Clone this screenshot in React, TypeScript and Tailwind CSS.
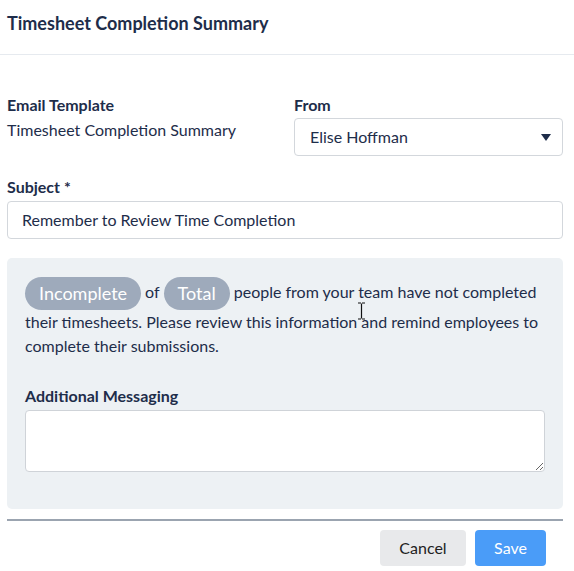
import React from 'react';

const Field: React.FC<{ label: string; children: React.ReactNode }> = ({ label, children }) => (
  <div className="flex flex-col">
    <span className="text-[16px] font-bold leading-[20px] text-[#1e2d4a]">{label}</span>
    {children}
  </div>
);

export default function App() {
  return (
    <div className="relative w-[574px] h-[571px] bg-white text-[#1e2d4a] font-['Lato',sans-serif]">
      <div className="h-[55px] border-b border-[#e6eaef] px-[7px] pt-[12px]">
        <h1 className="text-[18px] font-bold leading-[22px]">Timesheet Completion Summary</h1>
      </div>

      <div className="pl-[7px] pr-[11px] pt-[40px]">
        <div className="grid grid-cols-[287px_1fr]">
          <Field label="Email Template">
            <span className="mt-[5px] text-[16px] leading-[20px]">Timesheet Completion Summary</span>
          </Field>
          <Field label="From">
            <div className="mt-[3px] h-[38px] rounded-[4px] border border-[#d3d7dc] flex items-center justify-between pl-[15px] pr-[11px]">
              <span className="text-[16px]">Elise Hoffman</span>
              <svg width="10" height="7" viewBox="0 0 10 7"><path d="M0 0h10L5 7z" fill="#1e2d4a" /></svg>
            </div>
          </Field>
        </div>

        <div className="mt-[21px]">
          <Field label="Subject *">
            <div className="mt-[4px] h-[38px] rounded-[4px] border border-[#d3d7dc] flex items-center px-[14px]">
              <span className="text-[16px]">Remember to Review Time Completion</span>
            </div>
          </Field>
        </div>

        <div className="mt-[19px] h-[251px] rounded-[5px] bg-[#edf1f4] px-[18px] pt-[19px]">
          <p className="text-[16px] leading-[24px]">
            <span className="inline-block h-[33px] leading-[33px] rounded-full bg-[#9eaabb] px-[14px] text-[18px] text-white align-middle">Incomplete</span>
            <span className="mx-[4px]">of</span>
            <span className="inline-block h-[33px] leading-[33px] rounded-full bg-[#9eaabb] px-[14px] text-[18px] text-white align-middle">Total</span>
            <span className="ml-[4px]">people from your team have not completed their timesheets. Please review this information and remind employees to complete their submissions.</span>
          </p>
          <div className="mt-[28px]">
            <Field label="Additional Messaging">
              <textarea className="mt-[4px] h-[62px] w-full rounded-[4px] border border-[#cfd3d8] bg-white resize-y outline-none" />
            </Field>
          </div>
        </div>

        <div className="mt-[10px] border-t-2 border-[#9ba4b0]" />

        <div className="flex justify-end gap-[9px] pt-[9px] pr-[17px]">
          <button className="h-[36px] w-[86px] rounded-[4px] bg-[#e8e9eb] text-[16px] text-[#222]">Cancel</button>
          <button className="h-[36px] w-[71px] rounded-[4px] bg-[#4a9cf8] text-[16px] text-white">Save</button>
        </div>
      </div>

      {/* text cursor */}
      <svg className="absolute left-[357px] top-[302px]" width="9" height="18" viewBox="0 0 9 18">
        <path d="M1 1h3M5 1h3M4.5 1.5v15M1 17h3M5 17h3" stroke="#111" strokeWidth="1.2" fill="none" />
      </svg>
    </div>
  );
}
